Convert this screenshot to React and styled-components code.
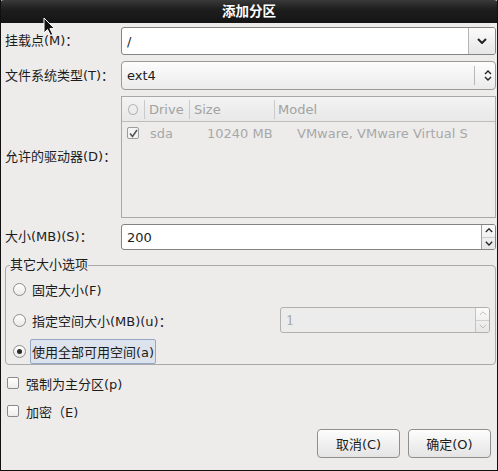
import React from "react";
import styled, { createGlobalStyle } from "styled-components";

const Global = createGlobalStyle`
  html, body { margin: 0; padding: 0; background: #edeceb; }
  body {
    font-family: "DejaVu Sans", "Noto Sans CJK SC", sans-serif;
    font-size: 13px;
    color: #1c1c1c;
  }
  * { box-sizing: border-box; }
`;

const Window = styled.div`
  position: relative;
  width: 498px;
  height: 471px;
  display: flex;
  flex-direction: column;
  background: #edeceb;
  border: 1px solid #101010;
  border-top: none;
  overflow: hidden;
`;

const TitleBar = styled.div`
  height: 23px;
  flex: none;
  margin: 0 -1px;
  display: flex;
  align-items: center;
  justify-content: center;
  background: linear-gradient(#3a3a3a, #1e1e1e 40%, #141414);
  color: #ffffff;
  font-weight: bold;
  font-size: 13.5px;
  line-height: 23px;
  border-radius: 4px 4px 0 0;
`;

const Content = styled.div`
  padding: 4px 1px 0 4px;
  display: flex;
  flex-direction: column;
`;

const Form = styled.div`
  display: grid;
  grid-template-columns: 116px 1fr;
  grid-template-rows: 28px 29px 122px 26px;
  row-gap: 6px;
`;

const Label = styled.div`
  align-self: center;
  white-space: nowrap;
  line-height: 16px;
`;

const Entry = styled.div`
  display: flex;
  align-items: stretch;
  height: 100%;
  border: 1px solid #838383;
  border-radius: 3px;
  background: #ffffff;
  overflow: hidden;
`;

const EntryText = styled.div`
  flex: 1;
  display: flex;
  align-items: center;
  padding-left: 5px;
  color: ${(p) => (p.$disabled ? "#a8a8a8" : "#1c1c1c")};
  font-family: ${(p) => (p.$serif ? "'DejaVu Serif', serif" : "inherit")};
`;

const ComboButton = styled.div`
  width: 27px;
  flex: none;
  display: flex;
  align-items: center;
  justify-content: center;
  border-left: 1px solid #b4b4b4;
  background: linear-gradient(#fbfbfb, #e6e6e6);
`;

const Combo = styled.div`
  display: flex;
  align-items: center;
  height: 100%;
  border: 1px solid #9a9a9a;
  border-radius: 4px;
  background: linear-gradient(#fdfdfd, #ebebeb);
  padding-left: 5px;
`;

const ComboText = styled.div`
  flex: 1;
`;

const ComboSep = styled.div`
  width: 1px;
  height: 19px;
  background: #b8b8b8;
  margin-right: 6px;
`;

const ComboArrows = styled.div`
  width: 14px;
  display: flex;
  justify-content: center;
`;

const Tree = styled.div`
  border: 1px solid #a8a8a8;
  background: #edeceb;
  display: flex;
  flex-direction: column;
  overflow: hidden;
`;

const TreeHeader = styled.div`
  height: 25px;
  flex: none;
  display: flex;
  align-items: center;
  border-bottom: 1px solid #bdbdbd;
  background: linear-gradient(#f3f3f3, #e8e8e8);
  color: #a2a2a2;
`;

const HeaderCell = styled.div`
  width: ${(p) => p.$w}px;
  flex: ${(p) => (p.$w ? "none" : "1")};
  height: 19px;
  display: flex;
  align-items: center;
  padding-left: ${(p) => p.$pad}px;
  border-right: ${(p) => (p.$sep ? "1px solid #cacaca" : "none")};
  white-space: nowrap;
`;

const HeaderCircle = styled.span`
  display: inline-block;
  width: 10px;
  height: 11px;
  border: 1px solid #b4b4b4;
  border-radius: 50%;
`;

const TreeRow = styled.div`
  height: 22px;
  display: grid;
  grid-template-columns: 28px 57px 90px 1fr;
  align-items: center;
  color: #a8a8a8;
  white-space: nowrap;
`;

const RowCheckCell = styled.div`
  padding-left: 5px;
  display: flex;
  align-items: center;
`;

const Cell = styled.div`
  overflow: hidden;
`;

const SmallCheck = styled.div`
  width: 12px;
  height: 12px;
  border: 1px solid #9c9c9c;
  border-radius: 2px;
  background: #f4f4f4;
  display: flex;
  align-items: center;
  justify-content: center;
`;

const SpinButtons = styled.div`
  width: 14px;
  flex: none;
  display: flex;
  flex-direction: column;
  border-left: 1px solid ${(p) => (p.$disabled ? "#c4c4c4" : "#a0a0a0")};
  background: linear-gradient(#fbfbfb, #e6e6e6);
`;

const SpinHalf = styled.div`
  flex: 1;
  display: flex;
  align-items: center;
  justify-content: center;
  & + & {
    border-top: 1px solid ${(p) => (p.$disabled ? "#cfcfcf" : "#a8a8a8")};
  }
`;

const Frame = styled.fieldset`
  margin: 7px 0 0 0;
  border: 1px solid #a9a9a9;
  border-radius: 4px;
  padding: 3px 5px 0 4px;
  display: flex;
  flex-direction: column;
  gap: 5px;
`;

const Legend = styled.legend`
  padding: 0;
  line-height: 16px;
  font-size: 13px;
`;

const RadioRow = styled.div`
  height: 26px;
  display: flex;
  align-items: center;
`;

const Radio = styled.div`
  width: 13px;
  height: 13px;
  margin-left: 3px;
  margin-right: 4px;
  flex: none;
  border: 1px solid #8c8c8c;
  border-radius: 50%;
  background: linear-gradient(#ffffff, #e9e9e9);
  display: flex;
  align-items: center;
  justify-content: center;
  &::after {
    content: "";
    display: ${(p) => (p.$checked ? "block" : "none")};
    width: 5px;
    height: 5px;
    border-radius: 50%;
    background: #2a2a2a;
  }
`;

const OptionLabel = styled.div`
  padding: 0 1px;
  height: 25px;
  display: flex;
  align-items: center;
  white-space: nowrap;
  border: 1px solid ${(p) => (p.$focus ? "#94a7c5" : "transparent")};
  border-radius: 2px;
  background: ${(p) => (p.$focus ? "#dce3ed" : "transparent")};
`;

const DisabledSpin = styled.div`
  margin-left: auto;
  width: 210px;
  height: 26px;
  display: flex;
  border: 1px solid #b0b0b0;
  border-radius: 3px;
  background: #ececec;
  overflow: hidden;
`;

const CheckRow = styled.div`
  height: 22px;
  display: flex;
  align-items: center;
  margin-top: ${(p) => p.$mt}px;
`;

const CheckBox = styled.div`
  width: 12px;
  height: 12px;
  margin-left: 2px;
  margin-right: 7px;
  border: 1px solid #8a8a8a;
  border-radius: 2px;
  background: linear-gradient(#ffffff, #ececec);
`;

const ButtonRow = styled.div`
  display: flex;
  justify-content: flex-end;
  gap: 8px;
  margin: 7px 5px 0 0;
`;

const Button = styled.div`
  width: 83px;
  height: 29px;
  display: flex;
  align-items: center;
  justify-content: center;
  border: 1px solid #8f8f8f;
  border-radius: 4px;
  background: linear-gradient(#fdfdfd, #e4e4e4);
`;

const Cursor = styled.svg`
  position: absolute;
  left: 42px;
  top: 17px;
`;

const ChevronDown = ({ w = 9, c = "#222", sw = 1.8 }) => (
  <svg width={w} height={w * 0.6} viewBox="0 0 10 6">
    <path d="M1 1 L5 5 L9 1" fill="none" stroke={c} strokeWidth={sw} />
  </svg>
);

const ChevronUp = ({ w = 9, c = "#222", sw = 1.8 }) => (
  <svg width={w} height={w * 0.6} viewBox="0 0 10 6">
    <path d="M1 5 L5 1 L9 5" fill="none" stroke={c} strokeWidth={sw} />
  </svg>
);

const UpDown = () => (
  <svg width="8" height="13" viewBox="0 0 8 13">
    <path d="M1 5 L4 2 L7 5 M1 8 L4 11 L7 8" fill="none" stroke="#222" strokeWidth="1.4" />
  </svg>
);

export default function App() {
  return (
    <>
      <Global />
      <Window>
        <TitleBar>添加分区</TitleBar>
        <Content>
          <Form>
            <Label>挂载点(M)：</Label>
            <Entry>
              <EntryText>/</EntryText>
              <ComboButton>
                <ChevronDown w={10} sw={2} />
              </ComboButton>
            </Entry>

            <Label>文件系统类型(T)：</Label>
            <Combo>
              <ComboText>ext4</ComboText>
              <ComboSep />
              <ComboArrows>
                <UpDown />
              </ComboArrows>
            </Combo>

            <Label>允许的驱动器(D)：</Label>
            <Tree>
              <TreeHeader>
                <HeaderCell $w={23} $pad={6} $sep>
                  <HeaderCircle />
                </HeaderCell>
                <HeaderCell $w={45} $pad={4} $sep>Drive</HeaderCell>
                <HeaderCell $w={85} $pad={4} $sep>Size</HeaderCell>
                <HeaderCell $pad={3}>Model</HeaderCell>
              </TreeHeader>
              <TreeRow>
                <RowCheckCell>
                  <SmallCheck>
                    <svg width="9" height="9" viewBox="0 0 9 9">
                      <path d="M1 4.5 L3.5 7.5 L8 1" fill="none" stroke="#555" strokeWidth="1.6" />
                    </svg>
                  </SmallCheck>
                </RowCheckCell>
                <Cell>sda</Cell>
                <Cell>10240 MB</Cell>
                <Cell>VMware, VMware Virtual S</Cell>
              </TreeRow>
            </Tree>

            <Label>大小(MB)(S)：</Label>
            <Entry>
              <EntryText>200</EntryText>
              <SpinButtons>
                <SpinHalf>
                  <ChevronUp w={8} sw={1.6} />
                </SpinHalf>
                <SpinHalf>
                  <ChevronDown w={8} sw={1.6} />
                </SpinHalf>
              </SpinButtons>
            </Entry>
          </Form>

          <Frame>
            <Legend>其它大小选项</Legend>
            <RadioRow>
              <Radio />
              <OptionLabel>固定大小(F)</OptionLabel>
            </RadioRow>
            <RadioRow>
              <Radio />
              <OptionLabel>指定空间大小(MB)(u)：</OptionLabel>
              <DisabledSpin>
                <EntryText $disabled $serif>1</EntryText>
                <SpinButtons $disabled>
                  <SpinHalf $disabled>
                    <ChevronUp w={8} sw={1} c="#b0b0b0" />
                  </SpinHalf>
                  <SpinHalf $disabled>
                    <ChevronDown w={8} sw={1} c="#b0b0b0" />
                  </SpinHalf>
                </SpinButtons>
              </DisabledSpin>
            </RadioRow>
            <RadioRow>
              <Radio $checked />
              <OptionLabel $focus>使用全部可用空间(a)</OptionLabel>
            </RadioRow>
          </Frame>

          <CheckRow $mt={7}>
            <CheckBox />
            强制为主分区(p)
          </CheckRow>
          <CheckRow $mt={6}>
            <CheckBox />
            加密（E)
          </CheckRow>

          <ButtonRow>
            <Button>取消(C)</Button>
            <Button>确定(O)</Button>
          </ButtonRow>
        </Content>
        <Cursor width="14" height="20" viewBox="0 0 14 20">
          <path
            d="M1 1 L1 16 L4.5 12.5 L7.5 18.5 L9.8 17.4 L6.9 11.6 L11.5 11.6 Z"
            fill="#111"
            stroke="#fff"
            strokeWidth="1"
          />
        </Cursor>
      </Window>
    </>
  );
}
